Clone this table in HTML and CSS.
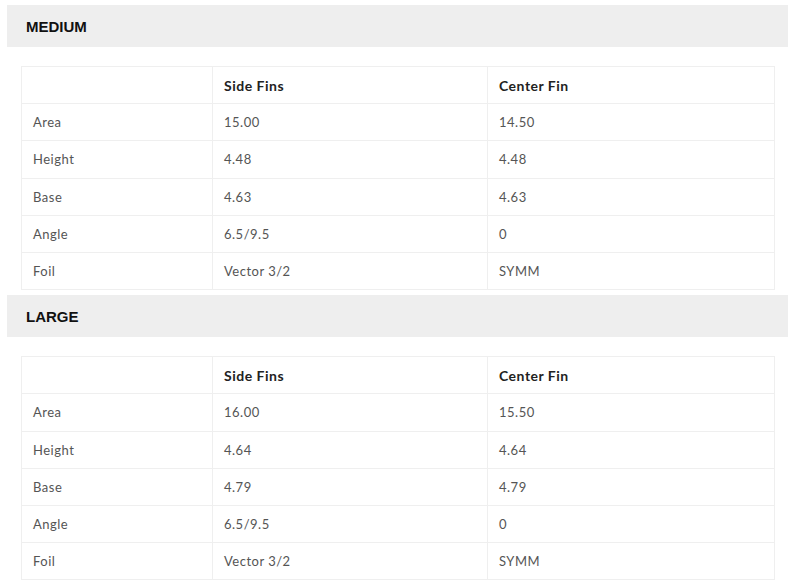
FILE: index.html
```html
<!DOCTYPE html>
<html>
<head>
<meta charset="utf-8">
<link rel="stylesheet" href="styles.css">
</head>
<body>
<div class="page">
  <section class="size">
    <h2 class="size-title">MEDIUM</h2>
    <table class="spec">
      <tr class="head"><th></th><th>Side Fins</th><th>Center Fin</th></tr>
      <tr><td>Area</td><td>15.00</td><td>14.50</td></tr>
      <tr><td>Height</td><td>4.48</td><td>4.48</td></tr>
      <tr><td>Base</td><td>4.63</td><td>4.63</td></tr>
      <tr><td>Angle</td><td>6.5/9.5</td><td>0</td></tr>
      <tr><td>Foil</td><td>Vector 3/2</td><td>SYMM</td></tr>
    </table>
  </section>
  <section class="size">
    <h2 class="size-title">LARGE</h2>
    <table class="spec">
      <tr class="head"><th></th><th>Side Fins</th><th>Center Fin</th></tr>
      <tr><td>Area</td><td>16.00</td><td>15.50</td></tr>
      <tr><td>Height</td><td>4.64</td><td>4.64</td></tr>
      <tr><td>Base</td><td>4.79</td><td>4.79</td></tr>
      <tr><td>Angle</td><td>6.5/9.5</td><td>0</td></tr>
      <tr><td>Foil</td><td>Vector 3/2</td><td>SYMM</td></tr>
    </table>
  </section>
</div>
</body>
</html>
```
FILE: styles.css
```css
html, body { margin: 0; padding: 0; background: #fff; }
.page {
  padding: 5px 12px 0 7px;
  display: flex;
  flex-direction: column;
  gap: 5px;
}
.size { display: flex; flex-direction: column; }
.size-title {
  margin: 0;
  height: 42px;
  box-sizing: border-box;
  background: #eeeeee;
  font-family: "Liberation Sans", Arial, sans-serif;
  font-weight: bold;
  font-size: 15px;
  line-height: 44px;
  padding-left: 19px;
  color: #111;
}
.spec {
  margin: 19px 13px 0 14px;
  border-collapse: collapse;
  border: 1px solid #efefef;
  font-family: "Lato", "Open Sans", sans-serif;
  font-size: 13px;
  color: #555;
}
.spec th, .spec td {
  border: 1px solid #efefef;
  height: 36.2px;
  padding: 0 11px;
  text-align: left;
  letter-spacing: 0.5px;
}
.spec th {
  font-weight: bold;
  color: #222;
  font-size: 14px;
}
.spec th:nth-child(1), .spec td:nth-child(1) { width: 168px; }
.spec th:nth-child(2), .spec td:nth-child(2) { width: 252px; }
```
